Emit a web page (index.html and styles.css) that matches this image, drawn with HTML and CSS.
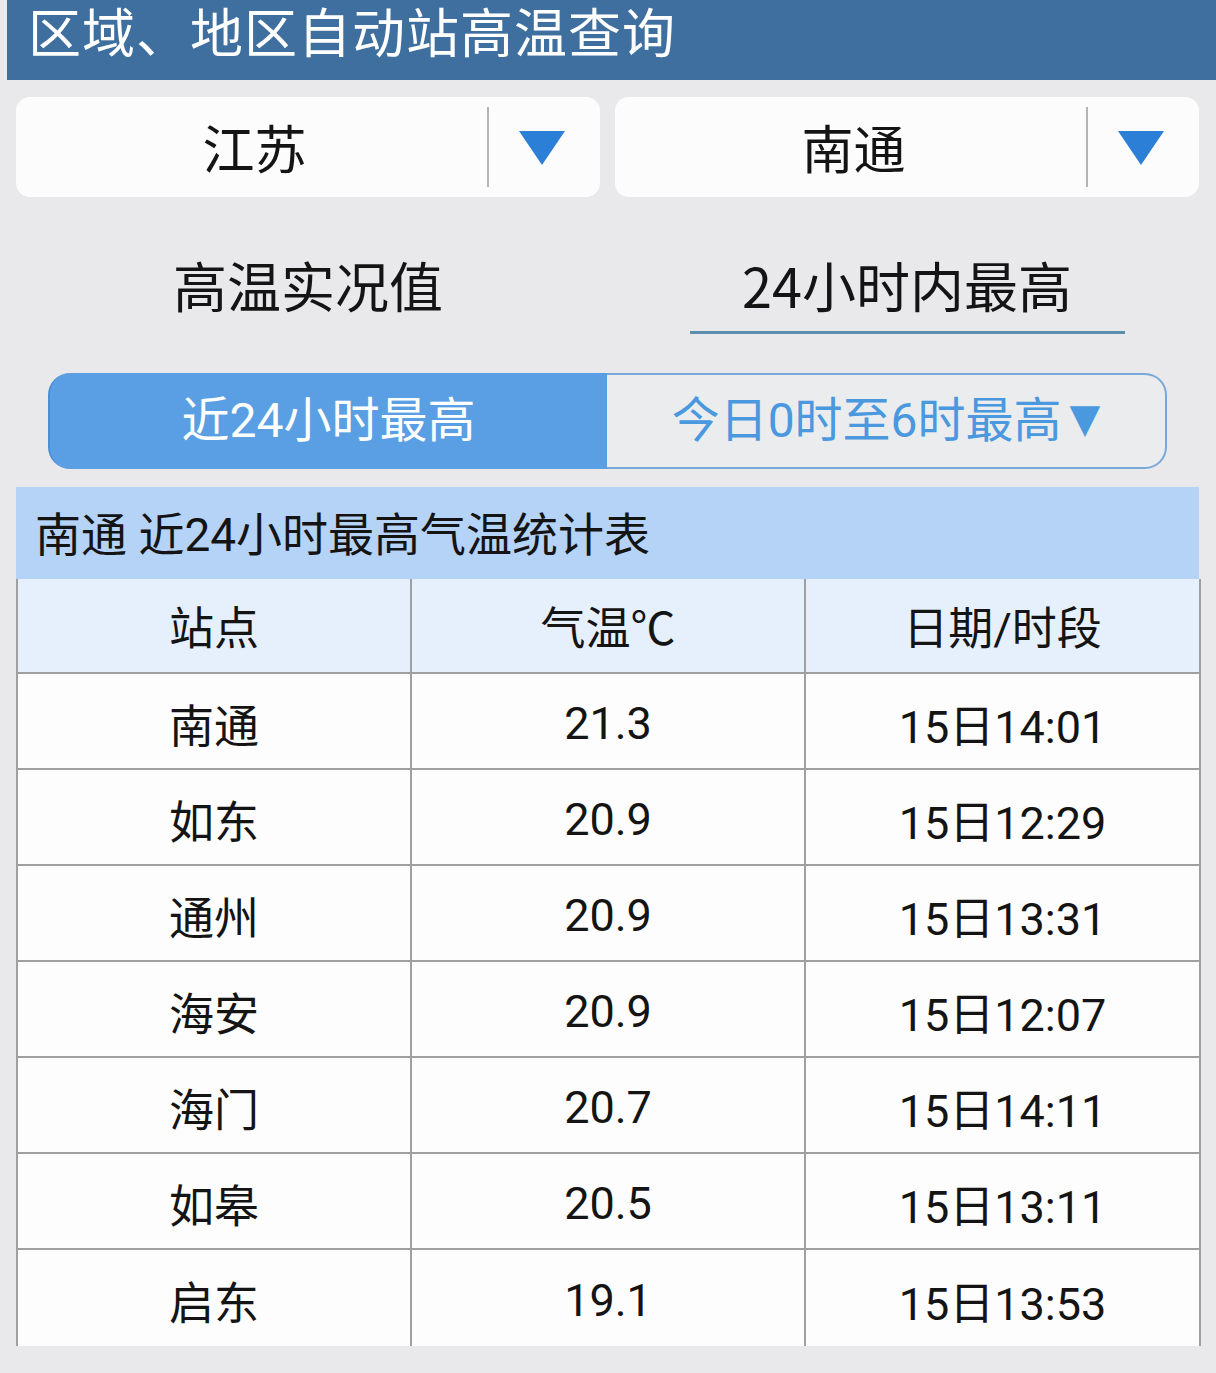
FILE: index.html
```html
<!DOCTYPE html>
<html lang="zh-CN">
<head>
<meta charset="utf-8">
<title>区域、地区自动站高温查询</title>
<link rel="stylesheet" href="styles.css">
</head>
<body>
<header class="topbar"><span class="topbar-title">区域、地区自动站高温查询</span></header>

<div class="selects">
  <div class="select">
    <div class="select-text">江苏</div>
    <div class="select-divider"></div>
    <div class="select-arrow">
      <svg width="46" height="34" viewBox="0 0 46 34"><polygon points="0,0 46,0 23,34" fill="#2b7fd6"/></svg>
    </div>
  </div>
  <div class="select">
    <div class="select-text">南通</div>
    <div class="select-divider"></div>
    <div class="select-arrow">
      <svg width="46" height="34" viewBox="0 0 46 34"><polygon points="0,0 46,0 23,34" fill="#2b7fd6"/></svg>
    </div>
  </div>
</div>

<div class="tabs">
  <div class="tab"><span class="tab-label">高温实况值</span></div>
  <div class="tab"><span class="tab-label active">24小时内最高</span></div>
</div>

<div class="segment">
  <div class="seg seg-on">近24小时最高</div>
  <div class="seg seg-off">今日0时至6时最高<span class="seg-caret">▼</span></div>
</div>

<div class="table-wrap">
  <div class="table-title">南通 近24小时最高气温统计表</div>
  <table class="data">
    <colgroup><col class="c1"><col class="c2"><col class="c3"></colgroup>
    <thead>
      <tr><th>站点</th><th>气温℃</th><th>日期/时段</th></tr>
    </thead>
    <tbody>
      <tr><td>南通</td><td>21.3</td><td>15日14:01</td></tr>
      <tr><td>如东</td><td>20.9</td><td>15日12:29</td></tr>
      <tr><td>通州</td><td>20.9</td><td>15日13:31</td></tr>
      <tr><td>海安</td><td>20.9</td><td>15日12:07</td></tr>
      <tr><td>海门</td><td>20.7</td><td>15日14:11</td></tr>
      <tr><td>如皋</td><td>20.5</td><td>15日13:11</td></tr>
      <tr class="last"><td>启东</td><td>19.1</td><td>15日13:53</td></tr>
    </tbody>
  </table>
</div>
</body>
</html>
```

FILE: styles.css
```css
html, body {
  margin: 0;
  padding: 0;
  background: #e9e9eb;
}
body {
  font-family: Roboto, "Noto Sans CJK SC", sans-serif;
  color: #141414;
  width: 1216px;
  height: 1373px;
  overflow: hidden;
}
.topbar {
  margin-left: 7px;
  height: 80px;
  background: #3f6f9f;
  color: #ffffff;
  font-family: "Noto Sans CJK SC", sans-serif;
  padding-left: 21px;
  padding-top: 3px;
  box-sizing: border-box;
}
.topbar-title {
  display: block;
  font-size: 53px;
  line-height: 54px;
  letter-spacing: 1px;
}
.selects {
  display: flex;
  gap: 15px;
  padding: 17px 17px 0 16px;
}
.select {
  flex: 1;
  height: 100px;
  background: #fcfcfd;
  border-radius: 14px;
  display: flex;
  align-items: center;
}
.select-text {
  flex: 1;
  text-align: center;
  font-family: "Noto Sans CJK SC", sans-serif;
  font-size: 52px;
  line-height: 60px;
  padding-left: 6px;
}
.select-divider {
  width: 2px;
  height: 80px;
  background: #b5b5b5;
}
.select-arrow {
  width: 111px;
  display: flex;
  justify-content: center;
  align-items: center;
  padding-top: 2px;
}
.select-arrow svg { display: block; margin-left: -6px; }

.tabs {
  display: flex;
  gap: 15px;
  padding: 53px 17px 0 16px;
}
.tab {
  flex: 1;
  display: flex;
  justify-content: center;
}
.tab-label {
  display: block;
  width: 435px;
  text-align: center;
  font-family: "Noto Sans CJK SC", sans-serif;
  font-size: 54px;
  line-height: 70px;
  padding-bottom: 11px;
  border-bottom: 3px solid transparent;
}
.tab-label.active {
  border-bottom-color: #5b8fae;
}

.segment {
  display: flex;
  margin: 39px 0 0 48px;
  width: 1119px;
  height: 96px;
}
.seg {
  flex: none;
  display: flex;
  align-items: center;
  justify-content: center;
  font-family: Roboto, "Noto Sans CJK SC", sans-serif;
  font-size: 48px;
  line-height: 60px;
  box-sizing: border-box;
}
.seg-on {
  width: 559px;
  background: #5a9fe3;
  color: #ffffff;
  border-radius: 22px 0 0 22px;
  border-left: 2px solid #4d8fd3;
}
.seg-off {
  width: 560px;
  color: #4a98de;
  border: 2px solid #79a8d8;
  border-left: none;
  border-radius: 0 22px 22px 0;
  background: #ebecee;
}
.seg-caret {
  font-family: "DejaVu Sans", sans-serif;
  font-size: 40px;
  margin-left: 8px;
  position: relative;
  top: -3px;
}

.table-wrap {
  margin: 18px 17px 0 16px;
  width: 1183px;
}
.table-title {
  height: 92px;
  background: #b4d3f7;
  font-family: Roboto, "Noto Sans CJK SC", sans-serif;
  font-size: 46px;
  line-height: 96px;
  padding-left: 19px;
  box-sizing: border-box;
}
.data {
  width: 1183px;
  border-collapse: collapse;
  table-layout: fixed;
}
.c1 { width: 394px; }
.c2 { width: 394px; }
.c3 { width: 395px; }
.data th, .data td {
  border: 2px solid #a0a0a0;
  border-top: none;
  text-align: center;
  vertical-align: middle;
  font-weight: normal;
  font-size: 45px;
  padding: 0;
  font-family: Roboto, "Noto Sans CJK SC", sans-serif;
}
.data th {
  background: #e6effc;
  height: 93px;
  border-bottom: 2px solid #a0a0a0;
}
.data td {
  background: #fdfdfd;
  height: 90px;
  padding-top: 4px;
}
.data tr.last td {
  border-bottom: none;
  height: 92px;
}
.data tr > :first-child { border-left: 2px solid #a0a0a0; }
```
